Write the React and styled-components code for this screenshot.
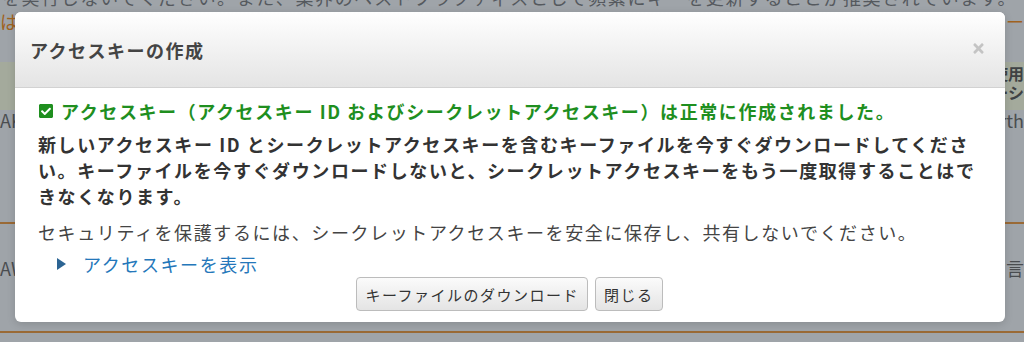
import styled, { createGlobalStyle } from "styled-components";
import { FaCheckSquare, FaTimes } from "react-icons/fa";

const GlobalStyle = createGlobalStyle`
  html, body {
    margin: 0;
    padding: 0;
    height: 342px;
    overflow: hidden;
    background: #9fa4a9;
    font-family: "Noto Sans CJK JP", "Noto Sans", sans-serif;
  }
`;

const Page = styled.div({
  position: "relative",
  height: "342px",
  overflow: "hidden",
  display: "flex",
  flexDirection: "column",
});

const TopText = styled.div({
  marginTop: "-14px",
  height: "26px",
  paddingLeft: "2px",
  fontSize: "18px",
  letterSpacing: "1.6px",
  lineHeight: "22px",
  color: "#55595e",
  whiteSpace: "nowrap",
});

const BackRow = styled.div(({ $height, $bg, $border }) => ({
  display: "flex",
  justifyContent: "space-between",
  alignItems: "center",
  height: $height,
  background: $bg || "transparent",
  borderBottom: $border ? "2px solid #9a6a36" : "none",
  fontSize: "18px",
  whiteSpace: "nowrap",
}));

const BackCell = styled.span(({ $color, $bold }) => ({
  color: $color || "#4a4d50",
  fontWeight: $bold ? 700 : 400,
  lineHeight: "18px",
}));

const HeadCell = styled.div({
  display: "flex",
  flexDirection: "column",
  alignItems: "flex-end",
  alignSelf: "flex-start",
  paddingTop: "2px",
  color: "#3f4244",
  fontWeight: 700,
  fontSize: "16px",
  lineHeight: "19px",
});

const Modal = styled.div({
  position: "absolute",
  top: "12px",
  left: "15px",
  width: "990px",
  height: "310px",
  background: "#fff",
  borderRadius: "6px",
  overflow: "hidden",
  display: "flex",
  flexDirection: "column",
  boxShadow: "0 2px 8px rgba(0,0,0,0.15)",
});

const Header = styled.div({
  height: "75px",
  display: "flex",
  alignItems: "center",
  justifyContent: "space-between",
  padding: "0 19px 0 15px",
  background: "linear-gradient(#ffffff, #e4e4e4)",
  borderBottom: "1px solid #d2d2d2",
});

const Title = styled.h3({
  margin: 0,
  fontSize: "18px",
  letterSpacing: "1.5px",
  fontWeight: 700,
  color: "#444",
});

const Close = styled.span({
  display: "flex",
  color: "#c4c4c4",
  marginTop: "-2px",
});

const Body = styled.div({
  padding: "10px 24px 10px 23px",
  display: "flex",
  flexDirection: "column",
  fontSize: "18px",
  letterSpacing: "1.6px",
  lineHeight: "26px",
});

const Success = styled.p({
  margin: 0,
  display: "flex",
  alignItems: "center",
  gap: "7px",
  color: "#1f8f1f",
  fontWeight: 700,
  whiteSpace: "nowrap",
});

const Warning = styled.p({
  margin: "7px 0 0",
  color: "#333",
  fontWeight: 700,
  whiteSpace: "nowrap",
});

const Note = styled.p({
  margin: "10px 0 0",
  color: "#444",
  whiteSpace: "nowrap",
});

const Toggle = styled.a({
  margin: "6px 0 0 19px",
  display: "flex",
  alignItems: "center",
  gap: "17px",
  color: "#2477ba",
  textDecoration: "none",
  cursor: "pointer",
});

const Arrow = styled.span({
  width: 0,
  height: 0,
  borderTop: "6px solid transparent",
  borderBottom: "6px solid transparent",
  borderLeft: "9px solid #2c6493",
});

const Actions = styled.div({
  display: "flex",
  justifyContent: "center",
  gap: "7px",
});

const Button = styled.button({
  height: "34px",
  padding: "0 8px",
  fontFamily: "inherit",
  fontSize: "15px",
  letterSpacing: "1.5px",
  color: "#333",
  background: "linear-gradient(#fbfbfb, #e4e4e4)",
  border: "1px solid #bcbcbc",
  borderRadius: "4px",
  cursor: "pointer",
});

const App = () => (
  <>
    <GlobalStyle />
    <Page>
      <TopText>
        を実行しないでください。また、業界のベストプラクティスとして頻繁にキーを更新することが推奨されています。
      </TopText>
      <BackRow $height="18px">
        <BackCell $color="#a0621f">は</BackCell>
        <BackCell $color="#a0621f">ペー</BackCell>
      </BackRow>
      <BackRow $height="32px" />
      <BackRow $height="48px" $bg="#a4aa9c">
        <span />
        <HeadCell>
          <span>使用</span>
          <span>ーシ</span>
        </HeadCell>
      </BackRow>
      <BackRow $height="20px">
        <BackCell>AKI</BackCell>
        <BackCell>rth</BackCell>
      </BackRow>
      <BackRow $height="92px" $border />
      <BackRow $height="88px">
        <BackCell>AW</BackCell>
        <BackCell>ス言</BackCell>
      </BackRow>
      <BackRow $height="19px" $border />

      <Modal>
        <Header>
          <Title>アクセスキーの作成</Title>
          <Close>
            <FaTimes size={15} />
          </Close>
        </Header>
        <Body>
          <Success>
            <FaCheckSquare size={16} />
            アクセスキー（アクセスキー ID およびシークレットアクセスキー）は正常に作成されました。
          </Success>
          <Warning>
            新しいアクセスキー ID とシークレットアクセスキーを含むキーファイルを今すぐダウンロードしてくださ
            <br />
            い。キーファイルを今すぐダウンロードしないと、シークレットアクセスキーをもう一度取得することはで
            <br />
            きなくなります。
          </Warning>
          <Note>
            セキュリティを保護するには、シークレットアクセスキーを安全に保存し、共有しないでください。
          </Note>
          <Toggle>
            <Arrow />
            アクセスキーを表示
          </Toggle>
          <Actions>
            <Button>キーファイルのダウンロード</Button>
            <Button>閉じる</Button>
          </Actions>
        </Body>
      </Modal>
    </Page>
  </>
);

export default App;
